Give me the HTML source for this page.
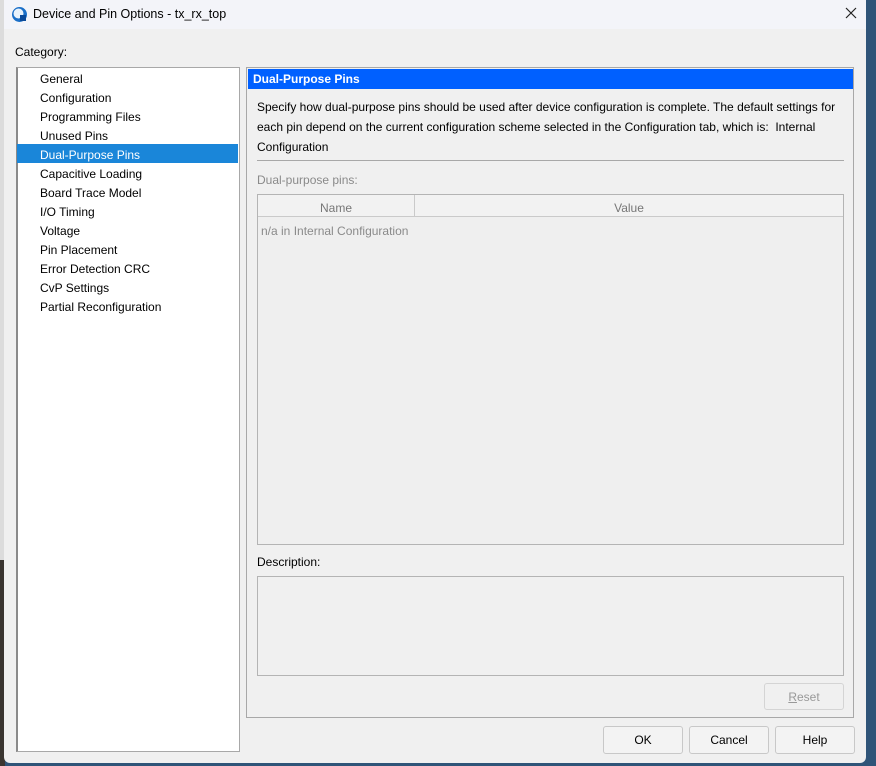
<!DOCTYPE html>
<html><head><style>
*{box-sizing:border-box;margin:0;padding:0}
body{width:876px;height:766px;overflow:hidden;position:relative;background:#2f5478;font-family:"Liberation Sans",sans-serif;font-size:12px;color:#000}
.a{position:absolute}
.t{font-size:12px;white-space:nowrap}
.btn{position:absolute;background:#f3f3f3;border:1px solid #c8c8c8;border-radius:3px;text-align:center;line-height:26px;font-size:12px}
</style></head><body>
<div class="a" style="left:0;top:0;width:5px;height:560px;background:#dcdcdc"></div>
<div class="a" style="left:0;top:560px;width:5px;height:206px;background:#3a3530"></div>
<div class="a" style="left:4px;top:0;width:862px;height:763px;background:#f0f0f0;border-radius:0 0 6px 6px"></div>
<div class="a" style="left:4px;top:0;width:862px;height:29px;background:#f3f4f9"></div>
<svg class="a" style="left:11px;top:6px" width="17" height="17" viewBox="0 0 17 17"><circle cx="8.5" cy="8.5" r="7.5" fill="#1a6fc8"/><circle cx="7.5" cy="7.5" r="5" fill="#e8f2fb"/><rect x="9" y="9" width="6" height="6" fill="#0a4a9a"/></svg>
<div class="a t" style="left:33px;top:7px;font-size:12.5px">Device and Pin Options - tx_rx_top</div>
<svg class="a" style="left:845px;top:7px" width="12" height="12"><path d="M1 1L11 11M11 1L1 11" stroke="#222" stroke-width="1.2"/></svg>
<div class="a t" style="left:15px;top:45px">Category:</div>
<div class="a" style="left:16px;top:67px;width:224px;height:685px;background:#fff;border:1px solid #a8a8a8;border-left:2px solid #8a8a8a"></div>
<div class="a" style="left:17px;top:144px;width:221px;height:19px;background:#1a86d9"></div>
<div class="a t" style="left:40px;top:70px;line-height:19px">General<br>Configuration<br>Programming Files<br>Unused Pins<br><span style="color:#fff">Dual-Purpose Pins</span><br>Capacitive Loading<br>Board Trace Model<br>I/O Timing<br>Voltage<br>Pin Placement<br>Error Detection CRC<br>CvP Settings<br>Partial Reconfiguration</div>
<div class="a" style="left:246px;top:67px;width:608px;height:651px;border:1px solid #a8a8a8"></div>
<div class="a" style="left:248px;top:69px;width:605px;height:20px;background:#0060ff;color:#fff;font-weight:bold;line-height:20px;padding-left:5px">Dual-Purpose Pins</div>
<div class="a" style="left:257px;top:97px;width:590px;line-height:20px;font-size:12px">Specify how dual-purpose pins should be used after device configuration is complete. The default settings for each pin depend on the current configuration scheme selected in the Configuration tab, which is:&nbsp; Internal Configuration</div>
<div class="a" style="left:257px;top:160px;width:587px;height:1px;background:#a8a8a8"></div>
<div class="a t" style="left:257px;top:173px;color:#8a8a8a">Dual-purpose pins:</div>
<div class="a" style="left:257px;top:194px;width:587px;height:351px;border:1px solid #b4b4b4;background:#efefef"></div>
<div class="a" style="left:258px;top:195px;width:585px;height:22px;background:#f2f2f2;border-bottom:1px solid #cacaca"></div>
<div class="a" style="left:414px;top:195px;width:1px;height:22px;background:#cacaca"></div>
<div class="a t" style="left:258px;top:201px;width:156px;text-align:center;color:#777">Name</div>
<div class="a t" style="left:415px;top:201px;width:428px;text-align:center;color:#777">Value</div>
<div class="a t" style="left:261px;top:224px;color:#8a8a8a">n/a in Internal Configuration</div>
<div class="a t" style="left:257px;top:555px">Description:</div>
<div class="a" style="left:257px;top:576px;width:587px;height:100px;border:1px solid #b4b4b4"></div>
<div class="btn" style="left:764px;top:683px;width:80px;height:27px;color:#999;background:#f0f0f0;border-color:#d4d4d4"><u>R</u>eset</div>
<div class="btn" style="left:603px;top:726px;width:80px;height:28px">OK</div>
<div class="btn" style="left:689px;top:726px;width:80px;height:28px">Cancel</div>
<div class="btn" style="left:775px;top:726px;width:80px;height:28px">Help</div>
</body></html>
